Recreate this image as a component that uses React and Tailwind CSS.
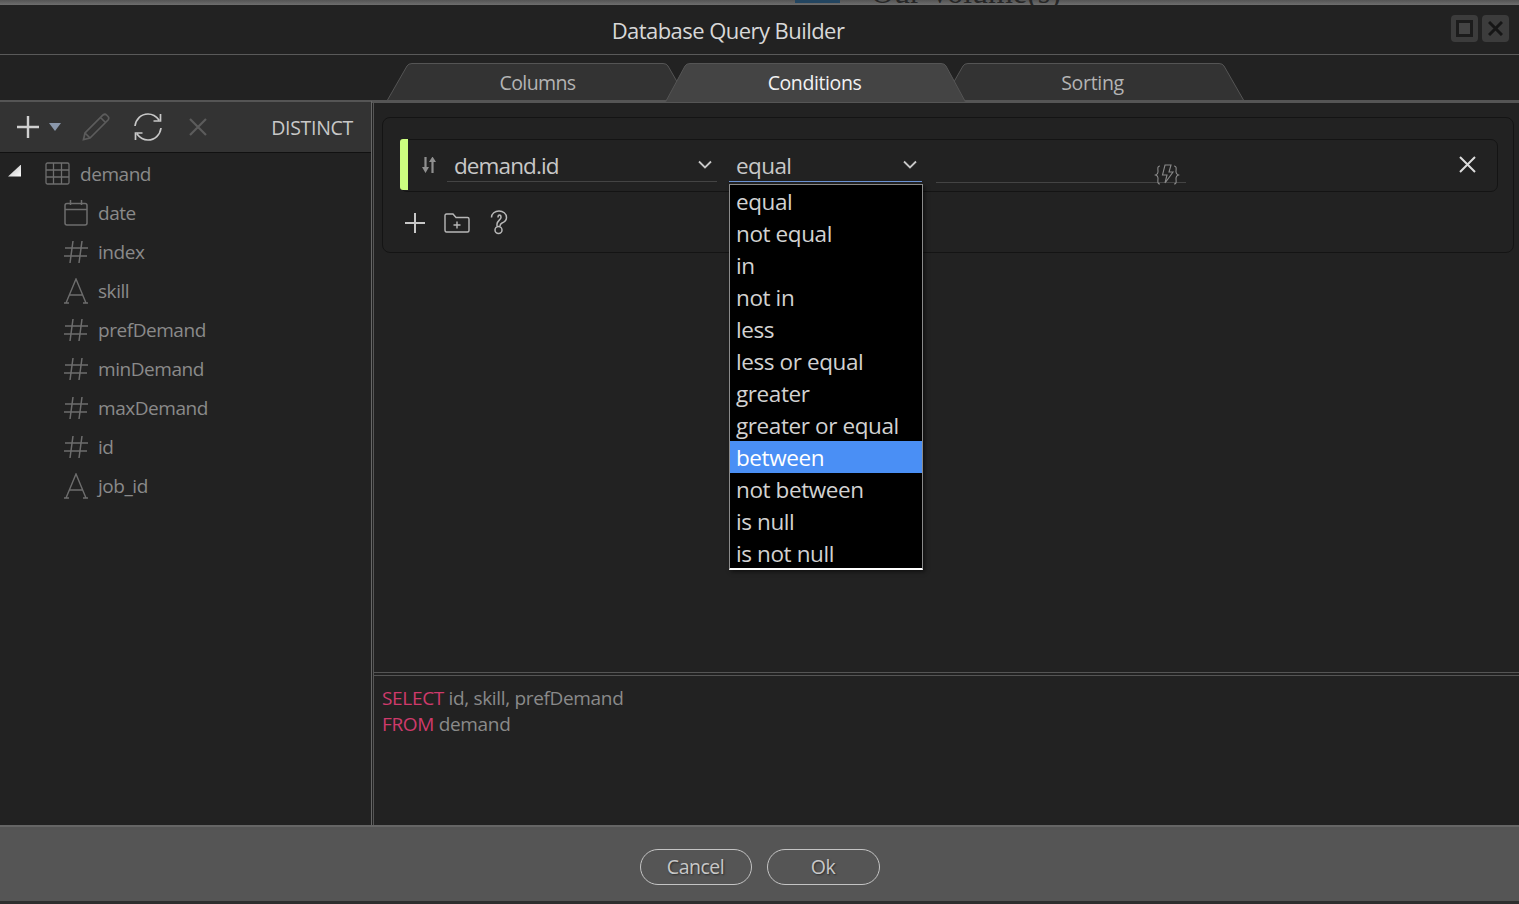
import React from "react";

const F = { fontFamily: '"Open Sans","Noto Sans",sans-serif' };

function Hash() {
  return (
    <svg width="24" height="24" viewBox="0 0 24 24" fill="none" stroke="#6e6e6e" strokeWidth="1.5">
      <path d="M9 1 6 23M18 1l-3 22M1 8h23M0 16h23" />
    </svg>
  );
}
function LetterA() {
  return (
    <svg width="24" height="26" viewBox="0 0 24 26" fill="none" stroke="#6e6e6e" strokeWidth="1.4">
      <path d="M2 25 12 1l10 24M5.5 17h13M0 25h5M19 25h5" />
    </svg>
  );
}
function Cal() {
  return (
    <svg width="24" height="26" viewBox="0 0 24 26" fill="none" stroke="#6e6e6e" strokeWidth="1.5">
      <rect x="1" y="3.5" width="22" height="21.5" rx="2" />
      <path d="M1 9.5h22M6.5 0v5M17.5 0v5" />
    </svg>
  );
}
function TableIcon() {
  return (
    <svg width="25" height="23" viewBox="0 0 25 23" fill="none" stroke="#6e6e6e" strokeWidth="1.3">
      <rect x="1" y="1" width="23" height="21" rx="1.5" />
      <path d="M1 8h23M1 15h23M8.5 1v21M16.500 1v21" />
    </svg>
  );
}

const fields = [
  ["date", Cal],
  ["index", Hash],
  ["skill", LetterA],
  ["prefDemand", Hash],
  ["minDemand", Hash],
  ["maxDemand", Hash],
  ["id", Hash],
  ["job_id", LetterA],
];

const ops = ["equal", "not equal", "in", "not in", "less", "less or equal", "greater", "greater or equal", "between", "not between", "is null", "is not null"];

function Tab({ label, active, cls, text }) {
  const h = active ? 39 : 37;
  return (
    <div className={`relative w-[301px] flex items-center justify-center ${active ? "h-[39px]" : "h-[37px]"} ${cls}`}>
      <svg className="absolute inset-0" width="301" height={h} viewBox={`0 0 301 ${h}`}>
        <path
          d={`M0.5 ${h} L20 3 Q21.500 0.500 25 0.500 L276 0.500 Q279.500 0.500 281 3 L300.500 ${h}`}
          fill={active ? "#444444" : "#333333"}
          stroke="#555555"
        />
      </svg>
      <span className={`relative text-[19.500px] ${text} ${active ? "text-[#f2f2f2]" : "text-[#b4b4b4] pt-[2px]"}`}>{label}</span>
    </div>
  );
}

function Chevron({ color = "#c8c8c8" }) {
  return (
    <svg width="14" height="9" viewBox="0 0 14 9" fill="none" stroke={color} strokeWidth="1.8">
      <path d="M1 1.500 7 7.500 13 1.500" />
    </svg>
  );
}

export default function App() {
  return (
    <div style={F} className="relative w-[1519px] h-[904px] overflow-hidden bg-[#222222] flex flex-col">
      <div className="h-[5px] shrink-0 bg-gradient-to-b from-[#555555] to-[#6e6e6e] relative overflow-hidden">
        <div className="absolute left-[795px] top-0 w-[45px] h-[3px] bg-[#234560]" />
        <span className="absolute left-[871px] -top-[26px] text-[32px] leading-[36px] text-[#262626] whitespace-nowrap [font-family:'Liberation_Serif',serif]">Our Volume(s)</span>
      </div>

      <div className="h-[50px] shrink-0 border-b border-[#5a5a5a] flex items-center justify-center relative">
        <span className="text-[22px] tracking-[-0.55px] text-[#d8d8d8] mr-[63px] mt-[2px]">Database Query Builder</span>
        <div className="absolute right-[10px] top-[10px] flex gap-[4px]">
          <div className="w-[27px] h-[27px] rounded-[4px] bg-[#3c3c3c] flex items-center justify-center">
            <div className="w-[17px] h-[17px] border-[3px] border-[#1c1c1c] bg-[#444444]" />
          </div>
          <div className="w-[27px] h-[27px] rounded-[4px] bg-[#3c3c3c] flex items-center justify-center">
            <svg width="15" height="15" viewBox="0 0 15 15" stroke="#161616" strokeWidth="3"><path d="M1 1l13 13M14 1 1 14" /></svg>
          </div>
        </div>
      </div>

      <div className="h-[45px] shrink-0 flex items-end pl-[387px]">
        <Tab label="Columns" cls="z-0" text="tracking-[-0.6px]" />
        <Tab label="Conditions" active cls="z-30 -ml-[23px] -mb-[2px]" text="tracking-[-0.4px] mr-[2px]" />
        <Tab label="Sorting" cls="z-0 -ml-[23px]" text="tracking-[-0.3px] mr-[2px]" />
      </div>

      <div className="flex-1 min-h-0 flex border-t-[3px] border-[#555555]">
        <div className="w-[372px] shrink-0 border-r border-[#666666] flex flex-col -mt-[2px] z-10">
          <div className="h-[52px] shrink-0 bg-[#333333] border-t border-[#555555] border-b border-b-[#111111] flex items-center pl-[17px] pr-[18px]">
            <svg width="22" height="22" viewBox="0 0 22 22" stroke="#d0d0d0" strokeWidth="2.400"><path d="M11 0v22M0 11h22" /></svg>
            <svg className="ml-[10px]" width="12" height="8" viewBox="0 0 12 8" fill="#8a97ab"><path d="M0 0h12L6 8z" /></svg>
            <svg className="ml-[21px]" width="28" height="28" viewBox="0 0 28 28" fill="none" stroke="#5c5c5c" strokeWidth="1.700">
              <path d="M1.500 26.500 3 20 21 2q2-1.500 3.500 0l1.500 1.500q1.500 1.500 0 3.500L8 25zM3 20l5 5M18.500 4.500l5 5" />
            </svg>
            <svg className="ml-[24px]" width="28" height="28" viewBox="0 0 28 28" fill="none" stroke="#c8c8c8" strokeWidth="1.700">
              <path d="M1 13C2 6 7 1 14 1c4.500 0 8 2 11 6M26.500 1v7h-7M27 15c-1 7-6 12-13 12-4.500 0-8-2-11-6M1.500 27v-7h7" />
            </svg>
            <svg className="ml-[27px]" width="18" height="18" viewBox="0 0 18 18" stroke="#5c5c5c" strokeWidth="2.200"><path d="M1 1l16 16M17 1 1 17" /></svg>
            <span className="ml-auto text-[19.500px] tracking-[-0.3px] text-[#c8c8c8] pt-[1px]">DISTINCT</span>
          </div>
          <div className="flex-1 pt-[2px] text-[#8a8a8a] text-[19px] tracking-[-0.45px]">
            <div className="h-[39px] flex items-center relative">
              <div className="ml-[8px] w-[13px] h-[12px] -mt-[8px] bg-gradient-to-br from-[#bbbbbb] to-white [clip-path:polygon(100%_0,100%_100%,0_100%)]" />
              <div className="ml-[24px] -mt-[2px]"><TableIcon /></div>
              <span className="ml-[10px]">demand</span>
            </div>
            {fields.map(([n, I]) => (
              <div key={n} className="h-[39px] flex items-center pl-[64px]">
                <div className="w-[24px] flex justify-center -mt-[2px]"><I /></div>
                <span className="ml-[10px]">{n}</span>
              </div>
            ))}
          </div>
        </div>

        <div className="flex-1 min-w-0 flex flex-col ml-[1px] border-l border-[#555555]">
          <div className="h-[570px] shrink-0 border-b border-[#555555] relative pl-[8px] pr-[5px] pt-[14px]">
            <div className="h-[136px] rounded-[8px] border border-[#141414] pt-[21px] pl-[17px] pr-[15px]">
              <div className="h-[53px] rounded-[7px] border border-[#141414] flex items-center relative">
                <div className="absolute -left-px -top-px w-[8px] h-[51px] bg-[#ccff80] rounded-l-[3px]" />
                <svg className="ml-[21px] -mt-[1px]" width="14" height="16" viewBox="0 0 14 16" stroke="#8f8f8f" strokeWidth="2.200" fill="#8f8f8f">
                  <path d="M3.500 0v13M10.500 3v13" />
                  <path d="M0 10h7l-3.500 6zM7 5h7l-3.500-5.500z" stroke="none" />
                </svg>
                <div className="ml-[11px] w-[270px] h-[35px] self-start mt-[7px] pt-[4px] border-b border-[#444444] flex items-center justify-between pl-[7px] pr-[5px]">
                  <span className="text-[22.500px] tracking-[-0.9px] text-[#c8c8c8]">demand.id</span>
                  <span className="-mt-[3px]"><Chevron /></span>
                </div>
                <div className="ml-[12px] w-[193px] h-[35px] self-start mt-[7px] pt-[4px] border-b border-[#6b93d6] flex items-center justify-between pl-[7px] pr-[5px]">
                  <span className="text-[22.500px] tracking-[-0.6px] text-[#c8c8c8]">equal</span>
                  <span className="-mt-[3px]"><Chevron /></span>
                </div>
                <div className="ml-[14px] w-[250px] h-[36px] self-start mt-[7px] border-b border-[#444444] flex justify-end items-end pr-[6px]">
                  <svg className="-mb-[4px]" width="26" height="22" viewBox="0 0 26 22" fill="none" stroke="#8a8a8a" strokeWidth="1.100">
                    <path d="M6 2C3 2 4 5 4 8c0 2-1 2.500-2.500 3C3 11.500 4 12 4 14c0 3-1 6 2 6M20 2c3 0 2 3 2 6 0 2 1 2.500 2.500 3-1.500.5-2.500 1-2.500 3 0 3 1 6-2 6" />
                    <path d="M11 1h6l-2 7h4l-8 11 2-8H8.500z" />
                  </svg>
                </div>
                <svg className="ml-auto mr-[21px] -mt-[2px]" width="17" height="17" viewBox="0 0 17 17" stroke="#dcdcdc" strokeWidth="2"><path d="M1 1l15 15M16 1 1 16" /></svg>
              </div>
              <div className="flex items-center mt-[18px] pl-[5px]">
                <svg width="20" height="20" viewBox="0 0 20 20" stroke="#c8c8c8" strokeWidth="2"><path d="M10 0v20M0 10h20" /></svg>
                <svg className="ml-[19px]" width="26" height="20" viewBox="0 0 26 20" fill="none" stroke="#b8b8b8" strokeWidth="1.400">
                  <path d="M1 17V2.500Q1 1 2.500 1h6.500l3 3.500h11.500Q25 4.500 25 6v11.500Q25 19 23.500 19h-21Q1 19 1 17zM13 8.500v7M9.500 12h7" />
                </svg>
                <svg className="ml-[20px]" width="18" height="25" viewBox="0 0 18 25" fill="none" stroke="#b8b8b8" strokeWidth="1.500">
                  <path d="M1.500 7.500C1.500 3.500 5 1 9 1s7.500 2.500 7.500 6.500c0 3-2 4.500-4.500 5.500-1.500.6-2 1.500-2 3M8 7.500c0-1.500.5-2.500 1.500-2.500s1.500 1 1.500 2.500c0 2-3.500 3-4 6.500V16" />
                  <circle cx="8.500" cy="20" r="3.500" />
                </svg>
              </div>
            </div>
            <div className="absolute left-[355px] top-[81px] w-[194px] h-[386px] bg-black border border-[#8a8a8a] border-b-[2px] border-b-white text-[22.500px] leading-[34px] tracking-[-0.4px] text-[#d2d2d2] shadow-[2px_2px_4px_rgba(0,0,0,0.5)] z-20">
              {ops.map((o) => (
                <div key={o} className={`h-[32px] pl-[6px] ${o === "between" ? "bg-[#4a8ff5] text-white" : ""}`}>{o}</div>
              ))}
            </div>
          </div>
          <div className="flex-1 border-t border-[#555555] mt-[2px] pt-[9px] pl-[8px] text-[19px] leading-[26px] tracking-[-0.33px] text-[#8a8a8a]">
            <div><span className="text-[#cf3a6b]">SELECT</span> id, skill, prefDemand</div>
            <div><span className="text-[#cf3a6b]">FROM</span> demand</div>
          </div>
        </div>
      </div>

      <div className="h-[79px] shrink-0 border-t-[2px] border-[#666666] bg-[#555555] flex justify-center gap-[15px] pt-[22px] relative">
        <button className="w-[112px] h-[36px] rounded-full border border-[#c4c4c4] text-[19.500px] tracking-[-0.5px] text-[#c8c8c8] [text-shadow:1px_1px_2px_rgba(0,0,0,0.5)]">Cancel</button>
        <button className="w-[113px] h-[36px] rounded-full border border-[#c4c4c4] text-[19.500px] tracking-[-0.5px] text-[#c8c8c8] [text-shadow:1px_1px_2px_rgba(0,0,0,0.5)]">Ok</button>
        <div className="absolute left-0 right-0 bottom-0 h-[3px] bg-[#2e2e2e]" />
      </div>
    </div>
  );
}
